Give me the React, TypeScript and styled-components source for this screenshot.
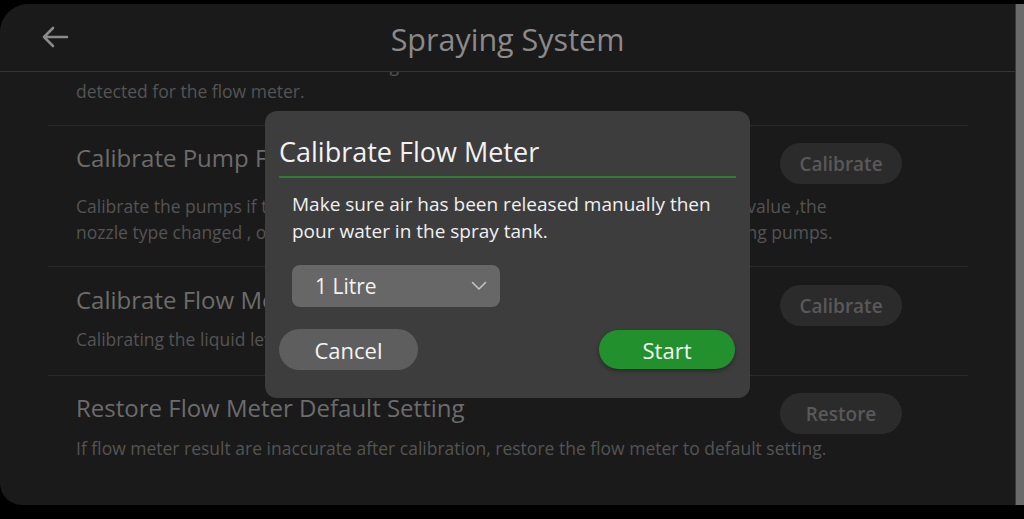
import React from "react";
import styled, { createGlobalStyle } from "styled-components";

const Global = createGlobalStyle`
  html, body { margin: 0; padding: 0; background: #000; }
  body { font-family: "Open Sans", "Noto Sans", Lato, sans-serif; }
  * { box-sizing: border-box; }
`;

const Page = styled.div`
  width: 1024px;
  height: 519px;
  padding: 4px 0 14px 0;
  display: flex;
  background: #000;
`;

const Screen = styled.div`
  position: relative;
  flex: 1;
  display: flex;
  flex-direction: column;
  background: #1a1a1a;
  border-radius: 28px 0 0 22px;
  overflow: hidden;
`;

const SideStrip = styled.div`
  width: 9px;
  background: #6a6a6a;
  border-left: 1px solid #3a3a3a;
`;

const Header = styled.header`
  height: 68px;
  flex-shrink: 0;
  display: grid;
  grid-template-columns: 1fr auto 1fr;
  align-items: center;
  border-bottom: 1px solid #1c451c;
`;

const BackButton = styled.div`
  display: flex;
  align-items: center;
  justify-self: start;
  margin: -2px 0 0 41px;
`;

const HeaderTitle = styled.h1`
  margin: 2px 0 0 0;
  font-size: 30.5px;
  line-height: 40px;
  font-weight: 400;
  color: #8a8a8a;
`;

const Content = styled.div`
  flex: 1;
  overflow: hidden;
  padding: 0 47px 0 48px;
`;

const Row = styled.section<{ $last?: boolean; $pt: number; $pb: number }>`
  padding: ${(p) => `${p.$pt}px 66px ${p.$pb}px 28px`};
  border-bottom: ${(p) => (p.$last ? "none" : "1px solid #2a2a2a")};
`;

const PartialRow = styled.section`
  padding: 0 66px 21px 28px;
  margin-top: -20px;
  border-bottom: 1px solid #2a2a2a;
`;

const TitleLine = styled.div`
  display: flex;
  align-items: flex-start;
  justify-content: space-between;
  height: 41px;
`;

const RowTitle = styled.h2`
  margin: 0;
  font-size: 24px;
  line-height: 30px;
  font-weight: 400;
  color: #6c6c6c;
`;

const GhostButton = styled.div`
  width: 122px;
  height: 41px;
  border-radius: 21px;
  background: #2b2b2b;
  color: #595959;
  font-size: 19px;
  font-weight: 600;
  display: flex;
  align-items: center;
  justify-content: center;
`;

const Desc = styled.p<{ $gap?: number }>`
  margin: ${(p) => (p.$gap ? `${p.$gap}px` : "0")} 0 0 0;
  font-size: 17.5px;
  line-height: 26px;
  color: #545454;
  white-space: nowrap;
`;

const Line = styled.span`
  display: block;
`;

const Backdrop = styled.div`
  position: absolute;
  inset: 0;
  display: flex;
  align-items: center;
  justify-content: center;
`;

const Modal = styled.div`
  width: 485px;
  height: 287px;
  background: #3d3d3d;
  border-radius: 12px;
  padding: 24px 14px 28px 14px;
  display: flex;
  flex-direction: column;
`;

const ModalTitle = styled.h3`
  margin: 0;
  font-size: 27px;
  line-height: 34px;
  font-weight: 400;
  color: #f2f2f2;
  padding-bottom: 7px;
  border-bottom: 2px solid #2e7d32;
`;

const ModalBody = styled.div`
  padding: 13px 13px 0 13px;
  display: flex;
  flex-direction: column;
`;

const ModalText = styled.p`
  margin: 0;
  font-size: 19px;
  line-height: 27px;
  color: #f0f0f0;
`;

const Select = styled.div`
  margin-top: 20px;
  width: 208px;
  height: 42px;
  border-radius: 8px;
  background: #676767;
  display: flex;
  align-items: center;
  justify-content: space-between;
  padding: 0 13px 0 23px;
  color: #f2f2f2;
  font-size: 21px;
`;

const Actions = styled.div`
  margin-top: auto;
  display: flex;
  align-items: center;
  justify-content: space-between;
`;

const PillButton = styled.button<{ $primary?: boolean }>`
  border: none;
  font-family: inherit;
  font-size: 22px;
  color: #f4f4f4;
  border-radius: 21px;
  width: ${(p) => (p.$primary ? "136px" : "139px")};
  height: ${(p) => (p.$primary ? "39px" : "41px")};
  background: ${(p) => (p.$primary ? "#22912d" : "#5e5e5e")};
  box-shadow: ${(p) => (p.$primary ? "0 2px 4px rgba(0,0,0,0.35)" : "none")};
  margin-right: ${(p) => (p.$primary ? "1px" : "0")};
  display: flex;
  align-items: center;
  justify-content: center;
`;

const BackArrow = () => (
  <svg width="28" height="22" viewBox="0 0 28 22" fill="none">
    <path d="M26 11H3M12 2L3 11L12 20" stroke="#8a8a8a" strokeWidth="2.6" strokeLinecap="round" strokeLinejoin="round" />
  </svg>
);

const Chevron = () => (
  <svg width="16" height="10" viewBox="0 0 16 10" fill="none">
    <path d="M1.5 1.5L8 8L14.5 1.5" stroke="#c4c4c4" strokeWidth="1.6" strokeLinecap="round" strokeLinejoin="round" />
  </svg>
);

export default function App() {
  return (
    <>
      <Global />
      <Page>
        <Screen>
          <Header>
            <BackButton>
              <BackArrow />
            </BackButton>
            <HeaderTitle>Spraying System</HeaderTitle>
            <div />
          </Header>
          <Content>
            <PartialRow>
              <Desc>
                <Line>Calibrate flow meter if the rate is wrong or no data is</Line>
                <Line>detected for the flow meter.</Line>
              </Desc>
            </PartialRow>
            <Row $pt={17} $pb={21}>
              <TitleLine>
                <RowTitle>Calibrate Pump Flow</RowTitle>
                <GhostButton>Calibrate</GhostButton>
              </TitleLine>
              <Desc $gap={9}>
                <Line>Calibrate the pumps if the measured sprayed flow rate differs greatly from the set value ,the</Line>
                <Line>nozzle type changed , or the spraying system was overhauled, such as after replacing pumps.</Line>
              </Desc>
            </Row>
            <Row $pt={18} $pb={23}>
              <TitleLine>
                <RowTitle>Calibrate Flow Meter</RowTitle>
                <GhostButton>Calibrate</GhostButton>
              </TitleLine>
              <Desc>
                <Line>Calibrating the liquid level sensor to improve its accuracy.</Line>
              </Desc>
            </Row>
            <Row $last $pt={17} $pb={22}>
              <TitleLine>
                <RowTitle>Restore Flow Meter Default Setting</RowTitle>
                <GhostButton>Restore</GhostButton>
              </TitleLine>
              <Desc $gap={1}>
                <Line>If flow meter result are inaccurate after calibration, restore the flow meter to default setting.</Line>
              </Desc>
            </Row>
          </Content>
          <Backdrop>
            <Modal>
              <ModalTitle>Calibrate Flow Meter</ModalTitle>
              <ModalBody>
                <ModalText>
                  Make sure air has been released manually then pour water in the spray tank.
                </ModalText>
                <Select>
                  <span>1 Litre</span>
                  <Chevron />
                </Select>
              </ModalBody>
              <Actions>
                <PillButton>Cancel</PillButton>
                <PillButton $primary>Start</PillButton>
              </Actions>
            </Modal>
          </Backdrop>
        </Screen>
        <SideStrip />
      </Page>
    </>
  );
}
